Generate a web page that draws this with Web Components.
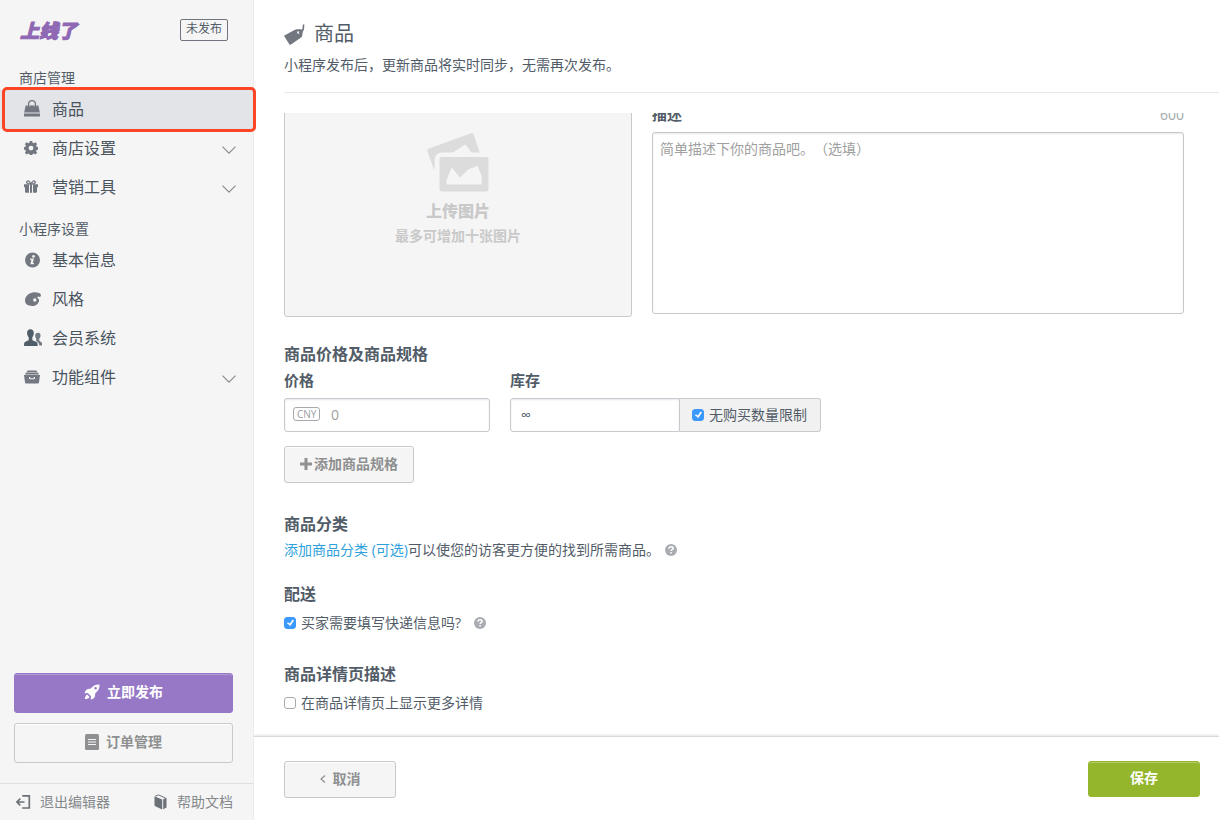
<!DOCTYPE html>
<html lang="zh-CN">
<head>
<meta charset="utf-8">
<meta name="viewport" content="width=device-width, initial-scale=1">
<title>商品</title>
<style>
  body {
    margin: 0;
    font: 14px/20px "Open Sans", "Noto Sans CJK SC", sans-serif;
    text-spacing-trim: space-all;
    color: #525c68;
    background: #fff;
    --line: #c8c9ce;
    --muted: #8f9091;
    --purple: #9678c6;
    --green: #94b62c;
  }
</style>
</head>
<body>
<shop-app></shop-app>

<script>
const define = (name, html, setup) => {
  const template = document.createElement('template');
  template.innerHTML = html;
  customElements.define(name, class extends HTMLElement {
    constructor() {
      super();
      this.attachShadow({ mode: 'open' }).append(template.content.cloneNode(true));
    }
    connectedCallback() {
      if (setup) setup(this, this.shadowRoot);
    }
  });
};

/* Icons: [width, height, markup] */
const ICONS = {
  bag: [16, 17, '<path d="M4.6 7V4a3.4 3.4 0 0 1 6.8 0v3" fill="none" stroke="currentColor" stroke-width="1.3"/><path d="M1.6 5.5h2.2v1.6h1.6V5.5h5.2v1.6h1.6V5.5h2.2L15.8 12.5H.2z"/><path d="M0 13.5h16V16a.5.5 0 0 1-.5.5H.5A.5.5 0 0 1 0 16z"/>'],
  gear: [14, 14, '<path fill-rule="evenodd" d="M5.8 0h2.4l.4 1.8 1.2.5 1.6-1 1.7 1.7-1 1.6.5 1.2 1.8.4v2.4l-1.8.4-.5 1.2 1 1.6-1.7 1.7-1.6-1-1.2.5-.4 1.8H5.8l-.4-1.8-1.2-.5-1.6 1L.9 11.8l1-1.6L1.4 9 0 8.6V6.2l1.4-.4.5-1.2-1-1.6 1.700-1.700 1.600 1 1.200-.5zM7 4.700a2.400 2.400 0 1 0 0 4.800 2.400 2.400 0 0 0 0-4.800z"/>'],
  gift: [14, 13, '<path d="M0 4.2h5v3H0zM6 4.2h2v8.5H6zM9 4.2h5v3H9zM1 7h4v5.7H2a1 1 0 0 1-1-1zM9 7h4v4.7a1 1 0 0 1-1 1H9z"/><path d="M6.6 4C3.5 4 2 2.8 3 1.4S6.2 1.5 6.6 4zM7.4 4C10.5 4 12 2.8 11 1.4S7.8 1.5 7.4 4z" fill="none" stroke="currentColor" stroke-width="1.3"/>'],
  info: [16, 16, '<circle cx="8.5" cy="8" r="7.5"/><g fill="#f5f5f5"><circle cx="9.5" cy="4.4" r="1.3"/><path d="M6.3 6.5h3.6l-1 4.5h1.2l-.3 1.3H6.4l1-4.5H6z"/></g>'],
  palette: [17, 16, '<path fill-rule="evenodd" d="M10.5 1.200c3 0 5.800.8 6.200 2 .4 1.300 0 2.600-.9 2.700-.7 0-1.300-.6-2.100-.2-.7.500-.2 1.400.7 2 .8.500.8 1.200.7 2C14.600 12.700 11.800 15 8 15 4.500 15 1 13.600 1 9.600c0-4.700 4.600-8.400 9.500-8.400zM10.800 7.300a1.700 1.700 0 1 0 0 3.400 1.700 1.700 0 0 0 0-3.400z"/>'],
  users: [18, 17, '<path d="M6.3.2c2.500 0 3.700 1.700 3.500 4-.1 1.900-.7 3.100-1.500 4v2.600c0 1.100 4.700 1.400 5.200 3.500l.2 2.700H0l.2-2.700c.4-2.100 4.500-2.400 4.500-3.500V8.200c-.9-.9-1.500-2.100-1.600-4C2.900 1.900 4 .2 6.300.2z"/><path d="M14 3.800c1.800 0 2.700 1.200 2.500 3-.1 1.300-.5 2.100-1.200 2.800v1.900c0 .9 2.400 1.300 2.700 2.500v2.400h-2.600c-.2-2.800-2.200-3.700-3.200-4.500V9.600c-.6-.7-.9-1.500-1-2.800-.1-1.800 1-3 2.800-3z" opacity=".8"/>'],
  box: [16, 16, '<path d="M4 1.500h8a1 1 0 0 1 1 1V3H3v-.5a1 1 0 0 1 1-1z"/><path d="M2 3.500h12l1 2H1z"/><path fill-rule="evenodd" d="M0 6h16l-1 7.500a1 1 0 0 1-1 .9H2a1 1 0 0 1-1-.9zM5 8.100v.8c0 .9.5 1.400 1.400 1.400h3.200c.9 0 1.400-.5 1.400-1.400v-.8h-1.100v.6c0 .4-.2.500-.5.500H6.600c-.3 0-.5-.1-.5-.5v-.6z"/>'],
  chevron: [14, 8, '<path d="M.5.7 7 7.2 13.500.7" fill="none" stroke="currentColor" stroke-width="1.1"/>'],
  back: [6, 8, '<path d="M5 .5 1 4l4 3.500" fill="none" stroke="currentColor" stroke-width="1.2"/>'],
  tag: [21, 21, '<path fill-rule="evenodd" d="M.8 11.200 11 5.700c2-.6 4.600-.6 7-.3 1 1.200.9 4.200-.2 7.600L7 20.600c-.6.4-1.300.2-1.700-.4L.4 12.600c-.3-.6-.2-1.100.4-1.400zM14.400 7.200a1.300 1.300 0 1 0 0 2.600 1.300 1.300 0 0 0 0-2.600z"/><path d="M14.800 8.400c3.300-.6 4.700-2 4.500-4.400 0-1.300.1-2.200.5-3.500" fill="none" stroke="currentColor" stroke-width="1.600"/>'],
  rocket: [16, 16, '<path fill-rule="evenodd" d="M15.500.5c-3.700-.2-6.400 1-8.600 4.100L3 5.200C1.600 6.500.8 7.800.5 9.300l3.300-.4 3.300 3.300-.4 3.300c1.600-.4 2.900-1.200 4.100-2.600l.6-3.900c3.100-2.200 4.300-4.900 4.100-8.500zM11.600 3a1.300 1.300 0 1 1 0 2.600 1.300 1.300 0 0 1 0-2.600z"/><path d="M3.100 10.400c-1.300.6-2 2.300-2.200 4.700 2.400-.1 4-.9 4.600-2.200z"/>'],
  order: [14, 16, '<rect width="14" height="16" rx="1.5"/><path d="M3 5.500h8M3 8h8M3 10.500h8" stroke="#f5f5f5" stroke-width="1.2"/>'],
  exit: [16, 16, '<path d="M8 2.500V1.800h6.300V14H8v-.700M1.800 8h7.700M5.300 4.600 1.900 8l3.400 3.400" fill="none" stroke="currentColor" stroke-width="1.700"/>'],
  book: [13, 16, '<path d="M1 2.600 8.200 5.500V15.500L1.300 12.300A1.300 1.300 0 0 1 .5 11V2.600z"/><path d="M1.200 2.200 4.400.9l7 3.100v9.700" fill="none" stroke="currentColor" stroke-width="1"/><path d="m9.200 5.300 3.300-1.600v9.800l-3.300 1.700z"/>'],
  plus: [12, 12, '<path d="M4.5 0h3v4.500H12v3H7.500V12h-3V7.500H0v-3h4.500z"/>'],
  help: [12, 12, '<circle cx="6" cy="6" r="6"/><path d="M4 4.700C4 3.400 4.800 2.800 6 2.800s2.100.6 2.100 1.600c0 1.200-2 1.300-2 2.500" fill="none" stroke="#fff" stroke-width="1.5"/><rect x="5.300" y="8" width="1.500" height="1.500" fill="#fff"/>'],
  photos: [62, 60, '<path d="M7.300 37.500.4 18.200c-.4-1.100.1-2 1.100-2.400L44 .3c1.100-.4 2.100.1 2.500 1.100l6.200 18.100h-8.400l-5.800-8.300-12.700 8.300H15.500c-4.700 0-7.800 3-7.800 7.700z"/><path fill-rule="evenodd" d="M14.500 24h45a2 2 0 0 1 2 2v30.500a2 2 0 0 1-2 2h-45a2 2 0 0 1-2-2V26a2 2 0 0 1 2-2zM24.700 34.500 19.500 47v4.500h35.200V43l-4.300-10.200-9.300 3.600-8 8.200z"/>']
};

class UiIcon extends HTMLElement {
  connectedCallback() {
    const [w, h, art] = ICONS[this.getAttribute('name')];
    const root = this.shadowRoot || this.attachShadow({ mode: 'open' });
    root.innerHTML = `<style>:host{display:block;flex:none}svg{display:block;fill:currentColor}</style>
      <svg width="${w}" height="${h}" viewBox="0 0 ${w} ${h}" aria-hidden="true">${art}</svg>`;
  }
}
customElements.define('ui-icon', UiIcon);

define('ui-button', `
  <style>
    :host { display: block; }
    button {
      display: flex; align-items: center; justify-content: center; gap: 7px;
      box-sizing: border-box; width: 100%; height: 37px; padding: 0 0 2px; margin: 0;
      border: 1px solid #c9c9c9; border-radius: 3px;
      background: #f5f5f5; color: var(--muted);
      font: inherit; font-weight: 700; cursor: pointer;
      box-shadow: inset 0 1px 0 #fff;
    }
    :host([large]) button { height: 40px; }
    :host([compact]) button { gap: 2px; }
    :host([kind=publish]) button { background: var(--purple); border-color: var(--purple); color: #fff; box-shadow: inset 0 1px 0 #b09ad6; }
    :host([kind=save]) button { height: 36px; background: var(--green); border-color: var(--green); color: #fff; box-shadow: inset 0 1px 0 #b2cb66; }
  </style>
  <button type="button"><slot name="icon"></slot><slot></slot></button>`);

define('check-field', `
  <style>
    :host { display: inline-flex; }
    label { display: flex; align-items: center; gap: 5px; line-height: 20px; }
    input {
      appearance: none; box-sizing: border-box; position: relative;
      width: 12px; height: 12px; margin: 0;
      border: 1px solid #a9a9a9; border-radius: 3px; background: #fff;
    }
    input:checked { background: #3b99fc; border-color: #3b99fc; }
    input:checked::before {
      content: ""; position: absolute; left: 3px; top: 0;
      width: 3px; height: 6px; border: solid #fff; border-width: 0 2px 2px 0;
      box-sizing: content-box; transform: rotate(35deg) scale(.8);
    }
  </style>
  <label><input type="checkbox"><slot></slot></label>`,
  (host, root) => { root.querySelector('input').checked = host.hasAttribute('checked'); });

define('help-mark', `
  <style>
    :host { display: inline-block; color: #a9acb0; }
    button { display: block; margin: 0; padding: 0; border: 0; background: none; color: inherit; }
  </style>
  <button type="button" aria-label="帮助"><ui-icon name="help"></ui-icon></button>`);

define('nav-group', `
  <style>
    :host { display: block; margin-bottom: 9px; }
    h2 { margin: 0; padding-left: 19px; font-size: 14px; line-height: 25px; font-weight: 400; }
  </style>
  <nav><h2></h2><slot></slot></nav>`,
  (host, root) => { root.querySelector('h2').textContent = host.getAttribute('heading'); });

define('nav-item', `
  <style>
    :host { display: block; position: relative; color: #4a545f; }
    a {
      display: grid; grid-template-columns: 28px 1fr auto; align-items: center;
      box-sizing: border-box; height: 39px; padding: 0 17px 2px 24px;
      color: inherit; text-decoration: none; font-size: 16px;
    }
    ui-icon { color: #727780; }
    :host([icon=users]) ui-icon { color: #4f5d68; }
    ui-icon[name=chevron] { color: #85888c; margin-top: 5px; }
    :host([current]) a { background: #e2e4e8; }
    :host([current])::after {
      content: ""; position: absolute; inset: -3px -3px -3px 2px;
      border: 3px solid #fb4524; border-radius: 5px; pointer-events: none;
    }
  </style>
  <a href="#"><slot></slot></a>`,
  (host, root) => {
    const link = root.querySelector('a');
    const icon = document.createElement('ui-icon');
    icon.setAttribute('name', host.getAttribute('icon'));
    link.prepend(icon);
    const text = document.createElement('span');
    text.append(link.querySelector('slot'));
    link.append(text);
    if (host.hasAttribute('expandable')) {
      const arrow = document.createElement('ui-icon');
      arrow.setAttribute('name', 'chevron');
      link.append(arrow);
    }
  });

define('side-bar', `
  <style>
    :host {
      display: flex; flex-direction: column; flex: none; box-sizing: border-box;
      width: 254px; background: #f5f5f5; border-right: 1px solid #ebebeb;
      position: relative; z-index: 1;
    }
    header { display: flex; justify-content: space-between; align-items: center; height: 60px; padding: 0 25px 5px 20px; }
    .logo { font: italic 900 19px/22px "Noto Sans CJK SC", sans-serif; color: #8f68b4; -webkit-text-stroke: 1px #8f68b4; }
    .status { border: 1px solid #70757d; border-radius: 2px; padding: 0 5px 2px; font-size: 12px; line-height: 18px; }
    .actions { display: grid; gap: 10px; margin: auto 20px 20px 14px; }
    footer { display: flex; justify-content: space-between; box-sizing: border-box; height: 37px; padding: 0 20px 0 15px; border-top: 1px solid #dfdfdf; }
    footer a { display: flex; align-items: center; gap: 9px; color: #85898c; text-decoration: none; }
    footer a + a { gap: 10px; }
    footer ui-icon { color: #6c7178; }
  </style>
  <header><span class="logo">上线了</span><span class="status">未发布</span></header>
  <nav-group heading="商店管理">
    <nav-item icon="bag" current>商品</nav-item>
    <nav-item icon="gear" expandable>商店设置</nav-item>
    <nav-item icon="gift" expandable>营销工具</nav-item>
  </nav-group>
  <nav-group heading="小程序设置">
    <nav-item icon="info">基本信息</nav-item>
    <nav-item icon="palette">风格</nav-item>
    <nav-item icon="users">会员系统</nav-item>
    <nav-item icon="box" expandable>功能组件</nav-item>
  </nav-group>
  <div class="actions">
    <ui-button kind="publish" large><ui-icon slot="icon" name="rocket"></ui-icon>立即发布</ui-button>
    <ui-button large><ui-icon slot="icon" name="order"></ui-icon>订单管理</ui-button>
  </div>
  <footer>
    <a href="#"><ui-icon name="exit"></ui-icon>退出编辑器</a>
    <a href="#"><ui-icon name="book"></ui-icon>帮助文档</a>
  </footer>`);

define('page-header', `
  <style>
    :host { display: block; flex: none; margin: 0 0 20px 30px; padding: 22px 0 17px; border-bottom: 1px solid #e8e8e8; }
    h1 { display: flex; align-items: center; gap: 9px; margin: 0 0 9px; font-size: 20px; line-height: 24px; font-weight: 400; }
    ui-icon { color: #727780; }
    p { margin: 0; }
  </style>
  <h1><ui-icon name="tag"></ui-icon><slot></slot></h1>
  <p><slot name="note"></slot></p>`);

define('image-upload', `
  <style>
    :host { display: block; flex: 0 1 348px; }
    button {
      display: flex; flex-direction: column; align-items: center;
      box-sizing: border-box; width: 100%; height: 212px; padding: 27px 0 0;
      border: 1px solid var(--line); border-radius: 3px; background: #f5f5f5;
      font: inherit; font-weight: 700; color: #c9c9c9;
    }
    ui-icon { color: #dcdcdc; margin-bottom: 8px; }
    strong { font-size: 16px; line-height: 20px; margin-bottom: 5px; }
  </style>
  <button type="button">
    <ui-icon name="photos"></ui-icon>
    <strong>上传图片</strong>
    <span>最多可增加十张图片</span>
  </button>`);

define('form-section', `
  <style>
    :host { display: block; margin-top: 29px; }
    :host([tight]) { margin-top: 22px; }
    :host([first]) { margin-top: 25px; }
    h2 { margin: 0; font-size: 16px; line-height: 24px; font-weight: 700; }
  </style>
  <section><h2></h2><slot></slot></section>`,
  (host, root) => { root.querySelector('h2').textContent = host.getAttribute('heading'); });

define('product-form', `
  <style>
    :host { display: block; flex: 1; min-height: 0; overflow-y: auto; scrollbar-width: none; }
    form { padding: 22px 35px 40px 30px; }
    label { display: block; font-size: 15px; font-weight: 700; line-height: 18px; margin-bottom: 9px; }
    .media { display: flex; gap: 20px; }
    .about { flex: 1; min-width: 0; }
    .caption { display: flex; justify-content: space-between; }
    output { color: #a5a8ad; }
    input, textarea {
      box-sizing: border-box; width: 100%; margin: 0; display: block;
      border: 1px solid var(--line); border-radius: 3px; background: #fff;
      font: inherit; color: inherit; outline: 0; text-spacing-trim: inherit;
      box-shadow: inset 0 1px 2px #e8e8ec;
    }
    textarea { height: 182px; padding: 6px 7px; resize: none; }
    ::placeholder { color: #a0a0a0; opacity: 1; }
    .row { display: flex; gap: 20px; margin: 5px 0 14px; }
    input { height: 34px; padding: 0 10px 2px; }
    .price { width: 206px; }
    .price div { display: grid; align-items: center; }
    .price div > * { grid-area: 1 / 1; }
    .price input { padding-left: 46px; }
    .unit { z-index: 1; justify-self: start; margin: 0 0 2px 9px; padding: 0 3px; border: 1px solid #a5a8ad; border-radius: 3px; font-size: 10px; line-height: 12px; color: #999da1; }
    .stock { width: 311px; }
    .stock div { display: flex; }
    .stock input { flex: 1; min-width: 0; border-radius: 3px 0 0 3px; }
    .stock check-field { border: 1px solid var(--line); border-left: 0; border-radius: 0 3px 3px 0; background: #f1f1f1; padding: 0 13px 0 12px; }
    .add { width: 130px; }
    p { display: flex; align-items: center; margin: 4px 0 0; }
    .check { display: flex; align-items: center; gap: 13px; margin-top: 7px; }
    a { color: #2ea1dd; text-decoration: none; }
    p help-mark { margin-left: 5px; }
  </style>
  <form>
    <div class="media">
      <image-upload></image-upload>
      <div class="about">
        <div class="caption"><label for="about">描述</label><output for="about">600</output></div>
        <textarea id="about" placeholder="简单描述下你的商品吧。（选填）"></textarea>
      </div>
    </div>
    <form-section first heading="商品价格及商品规格">
      <div class="row">
        <div class="price">
          <label for="price">价格</label>
          <div><span class="unit">CNY</span><input id="price" type="text" placeholder="0"></div>
        </div>
        <div class="stock">
          <label for="stock">库存</label>
          <div><input id="stock" type="text" value="∞"><check-field checked>无购买数量限制</check-field></div>
        </div>
      </div>
      <ui-button class="add" compact><ui-icon slot="icon" name="plus"></ui-icon>添加商品规格</ui-button>
    </form-section>
    <form-section heading="商品分类">
      <p><a href="#">添加商品分类 (可选)</a>可以使您的访客更方便的找到所需商品。<help-mark></help-mark></p>
    </form-section>
    <form-section tight heading="配送">
      <div class="check"><check-field checked>买家需要填写快递信息吗?</check-field><help-mark></help-mark></div>
    </form-section>
    <form-section heading="商品详情页描述">
      <div class="check"><check-field>在商品详情页上显示更多详情</check-field></div>
    </form-section>
  </form>`);

define('action-bar', `
  <style>
    :host {
      display: flex; justify-content: space-between; flex: none; box-sizing: border-box;
      height: 84px; padding: 24px 19px 0 30px; border-top: 1px solid #dadada;
      box-shadow: 0 -1px 2px #e4e4e4; background: #fff; position: relative;
    }
    ui-button { width: 112px; }
  </style>
  <ui-button><ui-icon slot="icon" name="back"></ui-icon>取消</ui-button>
  <ui-button kind="save">保存</ui-button>`);

define('shop-app', `
  <style>
    :host { display: flex; height: 100vh; }
    main { display: flex; flex-direction: column; flex: 1; min-width: 0; }
  </style>
  <side-bar></side-bar>
  <main>
    <page-header>商品<span slot="note">小程序发布后，更新商品将实时同步，无需再次发布。</span></page-header>
    <product-form></product-form>
    <action-bar></action-bar>
  </main>`,
  (host, root) => { root.querySelector('product-form').scrollTop = 30; });
</script>
</body>
</html>
